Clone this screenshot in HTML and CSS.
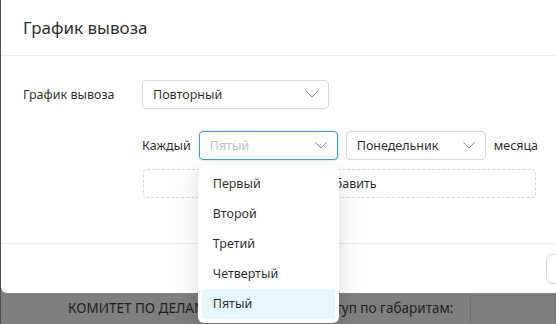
FILE: index.html
```html
<!DOCTYPE html>
<html lang="ru">
<head>
  <meta charset="UTF-8">
  <title>График вывоза</title>
  <link rel="stylesheet" href="styles.css">
</head>
<body>

<!-- ========= PAGE UNDER THE MASK ========= -->
<div class="page">
  <div class="page-row">
    <span class="org">КОМИТЕТ ПО ДЕЛАМ ЖИЛИЩНО-КОММУНАЛЬНОГО</span>
    <span class="access">Доступ по габаритам:</span>
    <span class="page-input"></span>
  </div>
</div>

<!-- ========= MODAL ========= -->
<div class="modal">
  <div class="modal-header">
    <h2>График вывоза</h2>
  </div>

  <div class="modal-body">
    <div class="form-row">
      <label class="form-label">График вывоза</label>
      <div class="select select-type">
        <span class="select-value">Повторный</span>
        <svg class="chevron" viewBox="0 0 12 7"><path d="M0.5 0.5 L6 6 L11.5 0.5"/></svg>
      </div>
    </div>

    <div class="repeat-row">
      <span class="text">Каждый</span>
      <div class="select select-week focused">
        <span class="select-value placeholder">Пятый</span>
        <svg class="chevron" viewBox="0 0 12 7"><path d="M0.5 0.5 L6 6 L11.5 0.5"/></svg>

        <!-- open dropdown -->
        <ul class="dropdown">
          <li>Первый</li>
          <li>Второй</li>
          <li>Третий</li>
          <li>Четвертый</li>
          <li class="active">Пятый</li>
        </ul>
      </div>
      <div class="select select-day">
        <span class="select-value">Понедельник</span>
        <svg class="chevron" viewBox="0 0 12 7"><path d="M0.5 0.5 L6 6 L11.5 0.5"/></svg>
      </div>
      <span class="text">месяца</span>
    </div>

    <div class="add-btn">
      <svg class="plus" viewBox="0 0 10 10"><path d="M5 0 V10 M0 5 H10"/></svg>
      <span>Добавить</span>
    </div>
  </div>

  <div class="modal-footer">
    <button class="btn">Отмена</button>
  </div>
</div>

</body>
</html>
```

FILE: styles.css
```css
/* ---------- base ---------- */
html, body {
  margin: 0;
  padding: 0;
  height: 100%;
  overflow: hidden;
}

body {
  background: #7f7f7f;               /* page seen through the mask */
  font-family: "Noto Sans", "Open Sans", sans-serif;
  font-size: 12.5px;
  color: rgba(0, 0, 0, 0.85);
  border-left: 1px solid #44505a;
}

/* ---------- page under the mask ---------- */
.page { padding-top: 294px; }
.page-row { display: flex; align-items: center; height: 28px; }
.org { margin-left: 67px; font-size: 13.5px; color: #1e1e1e; white-space: nowrap; width: 243px; overflow: hidden; }
.access { font-size: 13.5px; color: #1e1e1e; white-space: nowrap; }
.page-input { margin-left: 17px; flex: 1; height: 32px; margin-top: 8px; border: 1px solid #707070; border-radius: 3px; }

/* ---------- modal ---------- */
.modal {
  position: absolute;
  top: 0;
  left: 1px;
  width: 620px;
  height: 293px;
  background: #fff;
  border-radius: 0 0 6px 6px;
  display: flex;
  flex-direction: column;
}

.modal-header { height: 55px; border-bottom: 1px solid #eeeeee; display: flex; align-items: center; padding-left: 22px; }
.modal-header h2 { margin: 0 0 1px; font-size: 17px; font-weight: normal; color: rgba(0, 0, 0, 0.85); }

.modal-body { padding: 24px 0 0 22px; height: 188px; box-sizing: border-box; border-bottom: 1px solid #eeeeee; }

.form-row { display: flex; align-items: center; }
.form-label { width: 119px; color: rgba(0, 0, 0, 0.85); }

/* select */
.select {
  position: relative;
  box-sizing: border-box;
  height: 29px;
  border: 1px solid #d9d9d9;
  border-radius: 4px;
  display: flex;
  align-items: center;
  justify-content: space-between;
  padding: 0 10px 0 10px;
  background: #fff;
}
.select.focused { border-color: #3d9fd6; box-shadow: 0 0 0 1px rgba(61, 159, 214, 0.15); }
.select-type { width: 187px; }
.select-week { width: 139px; }
.select-day { width: 140px; }
.select-value { white-space: nowrap; }
.placeholder { color: #bfbfbf; }
.chevron { width: 12px; height: 7px; fill: none; stroke: #8c8c8c; stroke-width: 1; }

.repeat-row { display: flex; align-items: center; gap: 8px; margin: 22px 0 0 119px; }

/* dashed add button */
.add-btn {
  margin: 9px 0 0 120px;
  width: 393px;
  height: 29px;
  box-sizing: border-box;
  border: 1px dashed #d9d9d9;
  border-radius: 4px;
  display: flex;
  align-items: center;
  justify-content: center;
  gap: 6px;
}
.plus { width: 10px; height: 10px; stroke: rgba(0, 0, 0, 0.85); stroke-width: 1; }

/* open dropdown — lies over the form */
.dropdown {
  position: absolute;
  top: 33px;
  left: -2px;
  width: 141px;
  margin: 0;
  padding: 4px;
  box-sizing: border-box;
  list-style: none;
  background: #fff;
  border-radius: 6px;
  box-shadow: 0 3px 6px -4px rgba(0,0,0,0.12), 0 6px 16px 0 rgba(0,0,0,0.08), 0 9px 28px 8px rgba(0,0,0,0.05);
  z-index: 10;
}
.dropdown li { height: 30px; line-height: 30px; padding-left: 11px; border-radius: 4px; color: rgba(0, 0, 0, 0.85); }
.dropdown li.active { background: #e6f7ff; }

/* footer */
.modal-footer { flex: 1; display: flex; align-items: center; padding-left: 545px; }
.btn {
  height: 30px;
  padding: 0 14px;
  font: inherit;
  background: #fff;
  border: 1px solid #d9d9d9;
  border-radius: 6px;
  color: rgba(0, 0, 0, 0.85);
  white-space: nowrap;
}
```
